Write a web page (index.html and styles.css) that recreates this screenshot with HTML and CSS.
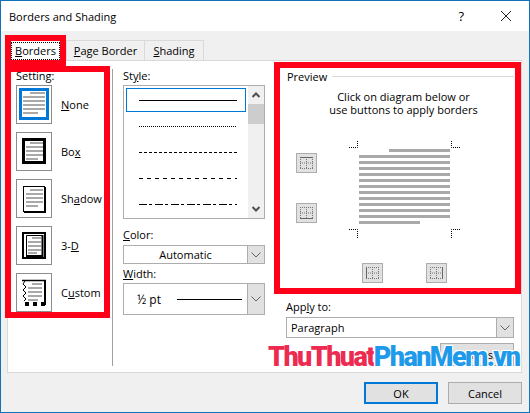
FILE: index.html
```html
<!DOCTYPE html>
<html lang="en">
<head>
  <meta charset="UTF-8">
  <title>Borders and Shading</title>
  <link rel="stylesheet" href="styles.css">
</head>
<body>
<svg class="defs" width="0" height="0">
  <symbol id="gridDots" viewBox="0 0 21 20">
    <path d="M4 4.5H17M4 15.5H17M4.5 4V16M16.5 4V16M4 10H17M10.5 4V16" fill="none" stroke="#777" stroke-dasharray="1 1"/>
  </symbol>
  <symbol id="chevron" viewBox="0 0 16 10">
    <path d="M3.5 2.5L8 7L12.5 2.5" fill="none" stroke="#606060" stroke-width="1"/>
  </symbol>
  <symbol id="chevronBold" viewBox="0 0 16 10">
    <path d="M4.5 3L8 6.5L11.5 3" fill="none" stroke="#505050" stroke-width="2"/>
  </symbol>
</svg>

<div class="dialog">
  <header class="titlebar">
    <span class="titleText">Borders and Shading</span>
    <span class="helpBtn">?</span>
    <svg class="closeBtn" width="12" height="12" viewBox="0 0 12 12"><path d="M1 1L11 11M11 1L1 11" fill="none" stroke="#222" stroke-width="1"/></svg>
  </header>

  <div class="dialogBody">
    <nav class="tabs">
      <div class="tab tabActive"><span class="focusBox"><u>B</u>orders</span></div>
      <div class="tab tabPage"><u>P</u>age Border</div>
      <div class="tab tabShading"><u>S</u>hading</div>
    </nav>

    <div class="panel">
      <section class="settings">
        <div class="settingsLabel">Setting:</div>
        <div class="settingsList">
          <div class="settingItem">
            <div class="thumb">
              <svg width="34" height="37" viewBox="1 1 34 37">
                <rect x="4.5" y="4.5" width="27" height="29" fill="none" stroke="#0078d7" stroke-width="3"/>
                <g fill="#a9a9a9"><rect x="14" y="7" width="15" height="2"/><rect x="7" y="11" width="22" height="2"/><rect x="7" y="15" width="22" height="2"/><rect x="7" y="19" width="22" height="2"/><rect x="7" y="23" width="22" height="2"/><rect x="7" y="27" width="15" height="2"/></g>
              </svg>
            </div>
            <span><u>N</u>one</span>
          </div>
          <div class="settingItem">
            <div class="thumb">
              <svg width="34" height="37" viewBox="1 1 34 37">
                <rect x="7.5" y="7.5" width="21" height="23" fill="none" stroke="#000" stroke-width="3"/>
                <g fill="#a9a9a9"><rect x="14" y="10" width="13" height="2"/><rect x="10" y="14" width="17" height="2"/><rect x="10" y="18" width="17" height="2"/><rect x="10" y="22" width="17" height="2"/><rect x="10" y="26" width="12" height="2"/></g>
              </svg>
            </div>
            <span>Bo<u>x</u></span>
          </div>
          <div class="settingItem">
            <div class="thumb">
              <svg width="34" height="37" viewBox="1 1 34 37">
                <rect x="7.5" y="7.5" width="21" height="25" fill="none" stroke="#000"/>
                <path d="M29 8V33H8" fill="none" stroke="#000" stroke-width="2"/>
                <g fill="#a9a9a9"><rect x="14" y="10" width="13" height="2"/><rect x="10" y="14" width="17" height="2"/><rect x="10" y="18" width="17" height="2"/><rect x="10" y="22" width="17" height="2"/><rect x="10" y="26" width="12" height="2"/></g>
              </svg>
            </div>
            <span>Sh<u>a</u>dow</span>
          </div>
          <div class="settingItem">
            <div class="thumb">
              <svg width="34" height="37" viewBox="1 1 34 37">
                <rect x="7" y="7" width="22" height="25" fill="none" stroke="#000" stroke-width="2"/>
                <path d="M10.5 29.5V9.5H26" fill="none" stroke="#000"/>
                <path d="M26.5 9V30H10" fill="none" stroke="#000" stroke-width="2"/>
                <g fill="#a9a9a9"><rect x="16" y="11" width="9" height="2"/><rect x="12" y="15" width="13" height="2"/><rect x="12" y="19" width="13" height="2"/><rect x="12" y="23" width="13" height="2"/><rect x="12" y="26" width="9" height="2"/></g>
              </svg>
            </div>
            <span>3-<u>D</u></span>
          </div>
          <div class="settingItem">
            <div class="thumb">
              <svg width="34" height="37" viewBox="1 1 34 37">
                <path d="M6 7.5H30" fill="none" stroke="#000" stroke-width="1.5"/>
                <path d="M9 8L7 11L10 14L7 17L10 20L7 23L10 26L8 28" fill="none" stroke="#000"/>
                <path d="M29 7V32" fill="none" stroke="#000" stroke-width="2"/>
                <rect x="9" y="29" width="4" height="4"/><rect x="17" y="29" width="4" height="4"/><rect x="25" y="29" width="4" height="4"/>
                <g fill="#a9a9a9"><rect x="16" y="10" width="10" height="2"/><rect x="12" y="14" width="14" height="2"/><rect x="12" y="18" width="14" height="2"/><rect x="12" y="22" width="14" height="2"/><rect x="12" y="26" width="10" height="2"/></g>
              </svg>
            </div>
            <span>C<u>u</u>stom</span>
          </div>
        </div>
      </section>

      <section class="styleCol">
        <div class="fieldLabel">St<u>y</u>le:</div>
        <div class="listbox">
          <div class="listRows">
            <div class="listRow listRowSelected"><div class="sample sampleSolid"></div></div>
            <div class="listRow"><div class="sample sampleDotted"></div></div>
            <div class="listRow"><div class="sample sampleDashed"></div></div>
            <div class="listRow"><div class="sample sampleWide"></div></div>
            <div class="listRow"><div class="sample sampleDashDot"></div></div>
          </div>
          <div class="scrollbar">
            <div class="scrollArrow"><svg class="arrowUp" width="16" height="10"><use href="#chevronBold"/></svg></div>
            <div class="scrollThumb"></div>
            <div class="scrollTrack"></div>
            <div class="scrollArrow"><svg width="16" height="10"><use href="#chevronBold"/></svg></div>
          </div>
        </div>

        <div class="fieldLabel colorLabel"><u>C</u>olor:</div>
        <div class="combo comboColor">
          <div class="comboValue comboCenter">Automatic</div>
          <div class="comboBtn"><svg width="16" height="10"><use href="#chevron"/></svg></div>
        </div>

        <div class="fieldLabel widthLabel"><u>W</u>idth:</div>
        <div class="combo comboWidth">
          <div class="comboValue widthValue"><span class="widthText">½ pt</span><div class="sample widthLine"></div></div>
          <div class="comboBtn"><svg width="16" height="10"><use href="#chevron"/></svg></div>
        </div>
      </section>

      <section class="previewCol">
        <div class="previewBox">
          <div class="legend"><span>Preview</span><div class="legendLine"></div></div>
          <p class="hint">Click on diagram below or<br>use buttons to apply borders</p>
          <div class="diagramRow">
            <div class="sideButtons">
              <div class="edgeBtn"><svg width="19" height="18" viewBox="1 1 19 18"><use href="#gridDots" width="21" height="20"/><path d="M4 4.5H17" stroke="#666"/></svg></div>
              <div class="edgeBtn"><svg width="19" height="18" viewBox="1 1 19 18"><use href="#gridDots" width="21" height="20"/><path d="M4 15.5H17" stroke="#666"/></svg></div>
            </div>
            <svg class="pageSvg" width="111" height="98" viewBox="0 0 111 98">
              <g fill="none" stroke="#000" stroke-dasharray="1 1">
                <path d="M0 7.5H8.5V0"/><path d="M111 7.5H102.5V0"/><path d="M0 89.5H8.5V98"/><path d="M111 89.5H102.5V98"/>
              </g>
              <g fill="#a9a9a9">
                <rect x="40" y="9" width="61" height="3"/>
                <rect x="10" y="15" width="91" height="3"/><rect x="10" y="21" width="91" height="3"/><rect x="10" y="27" width="91" height="3"/>
                <rect x="10" y="33" width="91" height="3"/><rect x="10" y="39" width="91" height="3"/><rect x="10" y="45" width="91" height="3"/>
                <rect x="10" y="51" width="91" height="3"/><rect x="10" y="57" width="91" height="3"/><rect x="10" y="63" width="91" height="3"/>
                <rect x="10" y="69" width="91" height="3"/><rect x="10" y="75" width="91" height="3"/>
                <rect x="10" y="81" width="61" height="3"/>
              </g>
            </svg>
          </div>
          <div class="bottomButtons">
            <div class="edgeBtn"><svg width="19" height="18" viewBox="1 1 19 18"><use href="#gridDots" width="21" height="20"/><path d="M4.5 4V16" stroke="#666"/></svg></div>
            <div class="edgeBtn"><svg width="19" height="18" viewBox="1 1 19 18"><use href="#gridDots" width="21" height="20"/><path d="M16.5 4V16" stroke="#666"/></svg></div>
          </div>
        </div>

        <div class="applyBlock">
          <div class="fieldLabel">App<u>l</u>y to:</div>
          <div class="combo comboApply">
            <div class="comboValue">Paragraph</div>
            <div class="comboBtn"><svg width="16" height="10"><use href="#chevron"/></svg></div>
          </div>
          <div class="optionsBtn">Options...</div>
        </div>
      </section>
    </div>

    <footer class="footer">
      <div class="btn btnDefault">OK</div>
      <div class="btn">Cancel</div>
    </footer>
  </div>

  <div class="watermark"><span class="wmRed">ThuThuat</span><span class="wmBlue">PhanMem.vn</span></div>
</div>
</body>
</html>
```
FILE: styles.css
```css
:root {
  --borderGrey: #adadad;
  --btnFace: #e1e1e1;
  --accent: #0078d7;
  --annotation: #ff0019;
}
* {
  box-sizing: border-box;
}
body {
  margin: 0;
  font-family: "Open Sans", "Noto Sans", sans-serif;
  font-size: 11px;
  color: #000;
}
u {
  text-underline-offset: 1px;
}
.defs {
  position: absolute;
}
.dialog {
  position: relative;
  width: 530px;
  height: 413px;
  border: 1px solid #1272b8;
  display: flex;
  flex-direction: column;
  overflow: hidden;
}

/* title bar */
.titlebar {
  height: 30px;
  flex: none;
  background: #fff;
  display: flex;
  align-items: center;
  padding: 0 17px 0 8px;
}
.titleText {
  flex: 1;
}
.helpBtn {
  margin-right: 36px;
  font-size: 13px;
}

/* body + tabs */
.dialogBody {
  flex: 1;
  background: #f0f0f0;
  padding: 9px 7px 0 6px;
}
.tabs {
  display: flex;
  height: 20px;
}
.tab {
  height: 20px;
  border: 1px solid #d9d9d9;
  border-bottom: none;
  display: flex;
  align-items: center;
  justify-content: center;
}
.tabActive {
  position: relative;
  z-index: 1;
  width: 59px;
  height: 21px;
  border: none;
  background: #fff;
  justify-content: flex-start;
  padding-left: 4px;
}
.tabActive::before {
  content: "";
  position: absolute;
  top: -5px;
  left: -2px;
  right: 0;
  bottom: -5px;
  border: 6px solid var(--annotation);
}
.focusBox {
  width: 49px;
  height: 18px;
  border: 1px dotted #000;
  display: block;
  text-align: center;
  line-height: 16px;
}
.tabPage {
  width: 79px;
}
.tabShading {
  width: 59px;
  border-left: none;
}

/* main panel */
.panel {
  height: 313px;
  background: #fff;
  border: 1px solid #d9d9d9;
  display: flex;
  align-items: flex-start;
}

/* setting column */
.settings {
  width: 105px;
  height: 252px;
  margin: 5px 2px 0 -3px;
  padding-left: 5px;
  border: 6px solid var(--annotation);
  position: relative;
  z-index: 2;
}
.settingsLabel {
  height: 13px;
  line-height: 8px;
}
.settingsList {
  display: flex;
  flex-direction: column;
  gap: 8px;
}
.settingItem {
  display: flex;
  align-items: center;
  gap: 9px;
}
.thumb {
  width: 36px;
  height: 39px;
  flex: none;
  background: #fff;
  border: 1px solid #8c8c8c;
}
.thumb svg {
  display: block;
}

/* style column */
.styleCol {
  width: 153px;
  height: 297px;
  margin: 8px 9px 0 0;
  padding-left: 10px;
  border-left: 1px solid #a0a0a0;
}
.fieldLabel {
  height: 14px;
  line-height: 14px;
}
.listbox {
  height: 134px;
  margin-top: 2px;
  border: 1px solid var(--borderGrey);
  display: flex;
}
.listRows {
  flex: 1;
  padding: 2px;
  display: flex;
  flex-direction: column;
  gap: 2px;
}
.listRow {
  height: 24px;
  border: 1px solid transparent;
  padding-left: 12px;
  display: flex;
  align-items: center;
}
.listRowSelected {
  border-color: var(--accent);
}
.sample {
  width: 98px;
  height: 1px;
}
.sampleSolid {
  background: #000;
}
.sampleDotted {
  background: repeating-linear-gradient(90deg, #000 0 1px, transparent 1px 2px);
}
.sampleDashed {
  background: repeating-linear-gradient(90deg, #000 0 3px, transparent 3px 5px);
}
.sampleWide {
  background: repeating-linear-gradient(90deg, #000 0 4px, transparent 4px 8px);
}
.sampleDashDot {
  background: repeating-linear-gradient(90deg, #000 0 8px, transparent 8px 10px, #000 10px 13px, transparent 13px 16px);
}
.scrollbar {
  width: 16px;
  background: #f0f0f0;
  display: flex;
  flex-direction: column;
}
.scrollArrow {
  height: 18px;
  display: flex;
  align-items: center;
}
.arrowUp {
  transform: rotate(180deg);
}
.scrollThumb {
  height: 20px;
  background: #cdcdcd;
}
.scrollTrack {
  flex: 1;
}
.colorLabel {
  margin-top: 9px;
}
.widthLabel {
  margin-top: 3px;
}
.combo {
  border: 1px solid var(--borderGrey);
  background: #fff;
  display: flex;
}
.comboColor {
  height: 19px;
  margin-top: 3px;
}
.comboWidth {
  height: 32px;
  margin-top: 2px;
}
.comboValue {
  flex: 1;
  display: flex;
  align-items: center;
}
.comboCenter {
  justify-content: center;
}
.widthValue {
  padding-left: 13px;
}
.widthText {
  width: 40px;
  font-size: 12px;
}
.widthLine {
  width: 65px;
  background: #000;
}
.comboBtn {
  width: 17px;
  background: var(--btnFace);
  border-left: 1px solid var(--borderGrey);
  display: flex;
  align-items: center;
}

/* preview column */
.previewCol {
  width: 247px;
  margin-top: 1px;
}
.previewBox {
  height: 232px;
  border: 6px solid var(--annotation);
  background: #fff;
}
.legend {
  margin: 1px 1px 0 7px;
  height: 14px;
  display: flex;
  align-items: center;
  gap: 5px;
}
.legendLine {
  flex: 1;
  height: 1px;
  background: #d9d9d9;
}
.hint {
  margin: 7px 0 0;
  padding-left: 12px;
  text-align: center;
  line-height: 13px;
}
.diagramRow {
  display: flex;
  margin-top: 24px;
  padding-left: 16px;
}
.sideButtons {
  margin-top: 13px;
  margin-right: 32px;
  display: flex;
  flex-direction: column;
  gap: 30px;
}
.pageSvg {
  display: block;
}
.bottomButtons {
  display: flex;
  gap: 43px;
  margin-top: 25px;
  padding-left: 82px;
}
.edgeBtn {
  width: 21px;
  height: 20px;
  background: var(--btnFace);
  border: 1px solid var(--borderGrey);
}
.edgeBtn svg {
  display: block;
}
.applyBlock {
  padding: 6px 7px 0 12px;
  display: flex;
  flex-direction: column;
}
.comboApply {
  height: 21px;
  margin-top: 3px;
}
.comboApply .comboValue {
  padding-left: 4px;
}
.optionsBtn {
  width: 74px;
  height: 23px;
  margin-top: 5px;
  align-self: flex-end;
  background: var(--btnFace);
  border: 1px solid var(--borderGrey);
  text-align: center;
  line-height: 21px;
}

/* footer buttons */
.footer {
  display: flex;
  justify-content: flex-end;
  gap: 10px;
  padding-top: 9px;
}
.btn {
  width: 74px;
  height: 22px;
  background: var(--btnFace);
  border: 1px solid var(--borderGrey);
  display: flex;
  align-items: center;
  justify-content: center;
}
.btnDefault {
  border: 2px solid var(--accent);
}

/* site watermark over the dialog */
.watermark {
  position: absolute;
  left: 267px;
  top: 338px;
  font-family: Roboto, sans-serif;
  font-size: 27px;
  font-weight: 900;
  letter-spacing: -1.6px;
  line-height: 36px;
  white-space: nowrap;
  text-shadow: 1px 0 #fff, -1px 0 #fff, 0 1px #fff, 0 -1px #fff, 1px 1px #fff, -1px -1px #fff, 1px -1px #fff, -1px 1px #fff;
}
.wmRed {
  color: #ed2a50;
}
.wmBlue {
  color: #1f9aea;
}
```
